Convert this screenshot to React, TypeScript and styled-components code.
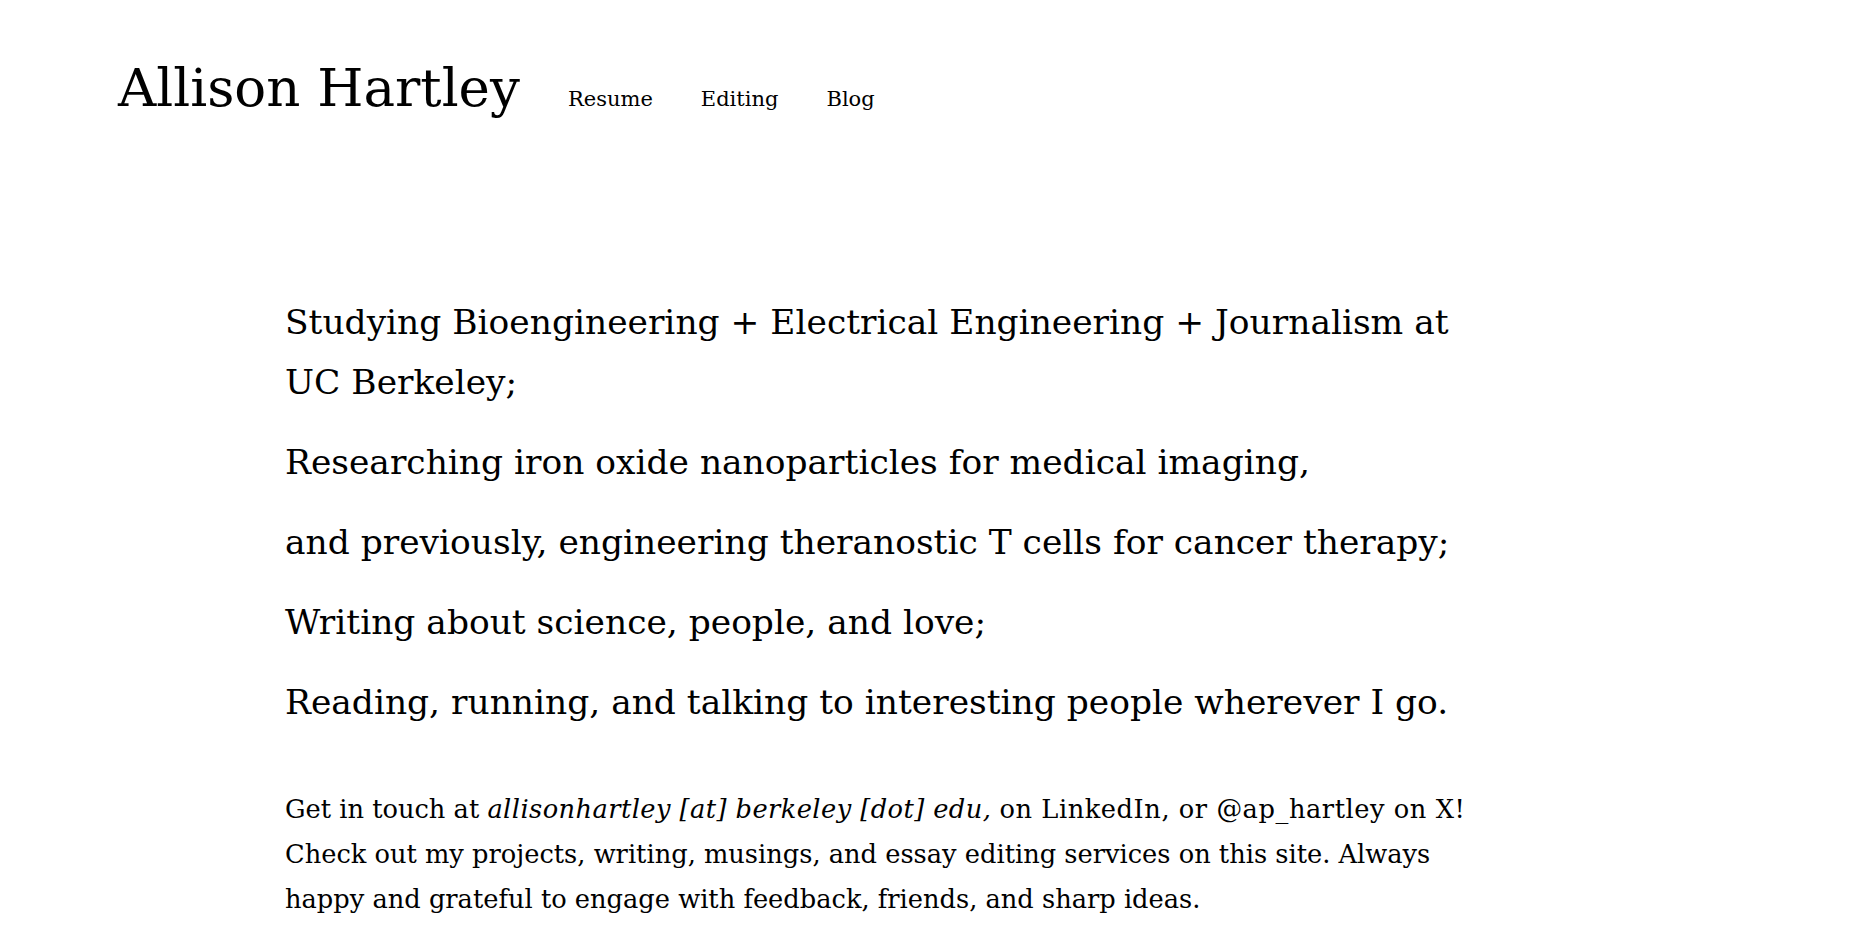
import React from "react";
import styled, { createGlobalStyle } from "styled-components";

const GlobalStyle = createGlobalStyle`
  html, body {
    margin: 0;
    padding: 0;
    background: #ffffff;
  }
  body {
    font-family: "DejaVu Serif", "Liberation Serif", serif;
    color: #000000;
  }
`;

const Page = styled.div`
  min-height: 930px;
  box-sizing: border-box;
`;

const Header = styled.header`
  display: flex;
  align-items: baseline;
  gap: 48px;
  padding: 56px 0 0 118px;
`;

const Title = styled.h1`
  margin: 0;
  font-family: "DejaVu Serif", serif;
  font-weight: 400;
  font-size: 53px;
  line-height: 64px;
  white-space: nowrap;
`;

const Nav = styled.nav`
  display: flex;
  align-items: baseline;
  gap: 48px;
`;

const NavLink = styled.a`
  font-family: "DejaVu Serif", serif;
  font-size: 21px;
  line-height: 28px;
  color: #000000;
  text-decoration: none;
  cursor: pointer;
`;

const Main = styled.main`
  width: 1200px;
  margin: 172px 0 0 285px;
`;

const Statement = styled.p`
  margin: 0 0 20px;
  font-size: 34.45px;
  line-height: 60px;
`;

const Contact = styled.p`
  margin: 55px 0 0;
  font-size: 25.7px;
  line-height: 45px;
`;

const Email = styled.em`
  font-style: italic;
  letter-spacing: 0.43px;
`;

const Handles = styled.span`
  letter-spacing: 0.55px;
`;

const statements = [
  "Studying Bioengineering + Electrical Engineering + Journalism at UC Berkeley;",
  "Researching iron oxide nanoparticles for medical imaging,",
  "and previously, engineering theranostic T cells for cancer therapy;",
  "Writing about science, people, and love;",
  "Reading, running, and talking to interesting people wherever I go.",
];

export default function App() {
  return (
    <Page>
      <GlobalStyle />
      <Header>
        <Title>Allison Hartley</Title>
        <Nav>
          <NavLink>Resume</NavLink>
          <NavLink>Editing</NavLink>
          <NavLink>Blog</NavLink>
        </Nav>
      </Header>
      <Main>
        {statements.map((s) => (
          <Statement key={s}>{s}</Statement>
        ))}
        <Contact>
          Get in touch at <Email>allisonhartley [at] berkeley [dot] edu,</Email>{" "}
          <Handles>on LinkedIn, or @ap_hartley on X!</Handles> Check out my
          projects, writing, musings, and essay editing services on this site.
          Always happy and grateful to engage with feedback, friends, and sharp
          ideas.
        </Contact>
      </Main>
    </Page>
  );
}
